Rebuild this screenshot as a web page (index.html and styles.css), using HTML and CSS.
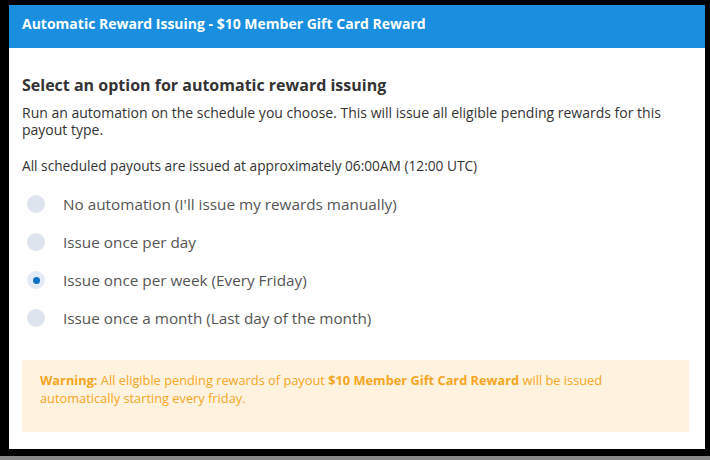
FILE: index.html
```html
<!DOCTYPE html>
<html>
<head>
    <meta name='viewport' content='width=device-width, initial-scale=1'>
    <link rel="stylesheet" href="styles.css">
</head>
<body>
<div id="modal">
    <div class="modal-header">Automatic Reward Issuing - $10 Member Gift Card Reward</div>

    <div class="modal-body">
        <h3>Select an option for automatic reward issuing</h3>
        <p class="intro">Run an automation on the schedule you choose. This will issue all eligible pending rewards for this payout type.</p>
        <p class="note">All scheduled payouts are issued at approximately 06:00AM (12:00 UTC)</p>

        <div class="options">
            <label class="option"><span class="radio"></span>No automation (I'll issue my rewards manually)</label>
            <label class="option"><span class="radio"></span>Issue once per day</label>
            <label class="option"><span class="radio checked"></span>Issue once per week (Every Friday)</label>
            <label class="option"><span class="radio"></span>Issue once a month (Last day of the month)</label>
        </div>

        <div class="warning">
            <b>Warning:</b> All eligible pending rewards of payout <b>$10 Member Gift Card Reward</b> will be issued automatically starting every friday.
        </div>
    </div>
</div>
</body>
</html>
```

FILE: styles.css
```css
html, body {
    margin: 0;
    height: 100%;
    background: #8a8a8a;
}

body {
    font-family: 'Open Sans', sans-serif;
}

#modal {
    width: 696px;
    height: 444px;
    background: #fff;
    border-top: 5px solid #000;
    border-left: 9px solid #000;
    border-right: 5px solid #000;
    border-bottom: 7px solid #000;
    display: flex;
    flex-direction: column;
}

.modal-header {
    background: #1a8fe0;
    color: #fff;
    font-weight: bold;
    font-size: 14px;
    height: 43px;
    line-height: 38px;
    padding-left: 13px;
}

.modal-body {
    padding: 27px 16px 0 13px;
}

h3 {
    margin: 0;
    font-size: 16px;
    color: #333;
    line-height: 20px;
}

.intro {
    margin: 9px 0 0;
    font-size: 14px;
    line-height: 17px;
    color: #333;
    padding-right: 20px;
}

.note {
    margin: 19px 0 0;
    font-size: 13.7px;
    line-height: 17px;
    color: #333;
}

.options {
    display: flex;
    flex-direction: column;
    margin-top: 11px;
}

.option {
    display: flex;
    align-items: center;
    height: 38px;
    font-size: 15.3px;
    color: #555;
}

.radio {
    width: 18px;
    height: 18px;
    border-radius: 50%;
    background: #dde4ee;
    margin: 0 18px 0 5px;
    display: flex;
    align-items: center;
    justify-content: center;
}

.radio.checked {
    background: #e3ebf5;
}

.radio.checked::after {
    content: '';
    width: 7px;
    height: 7px;
    border-radius: 50%;
    background: #0c72c4;
}

.warning {
    margin-top: 23px;
    background: #fff2df;
    border-radius: 3px;
    color: #f5a623;
    font-size: 12.8px;
    line-height: 18px;
    padding: 11px 60px 25px 18px;
}
```
